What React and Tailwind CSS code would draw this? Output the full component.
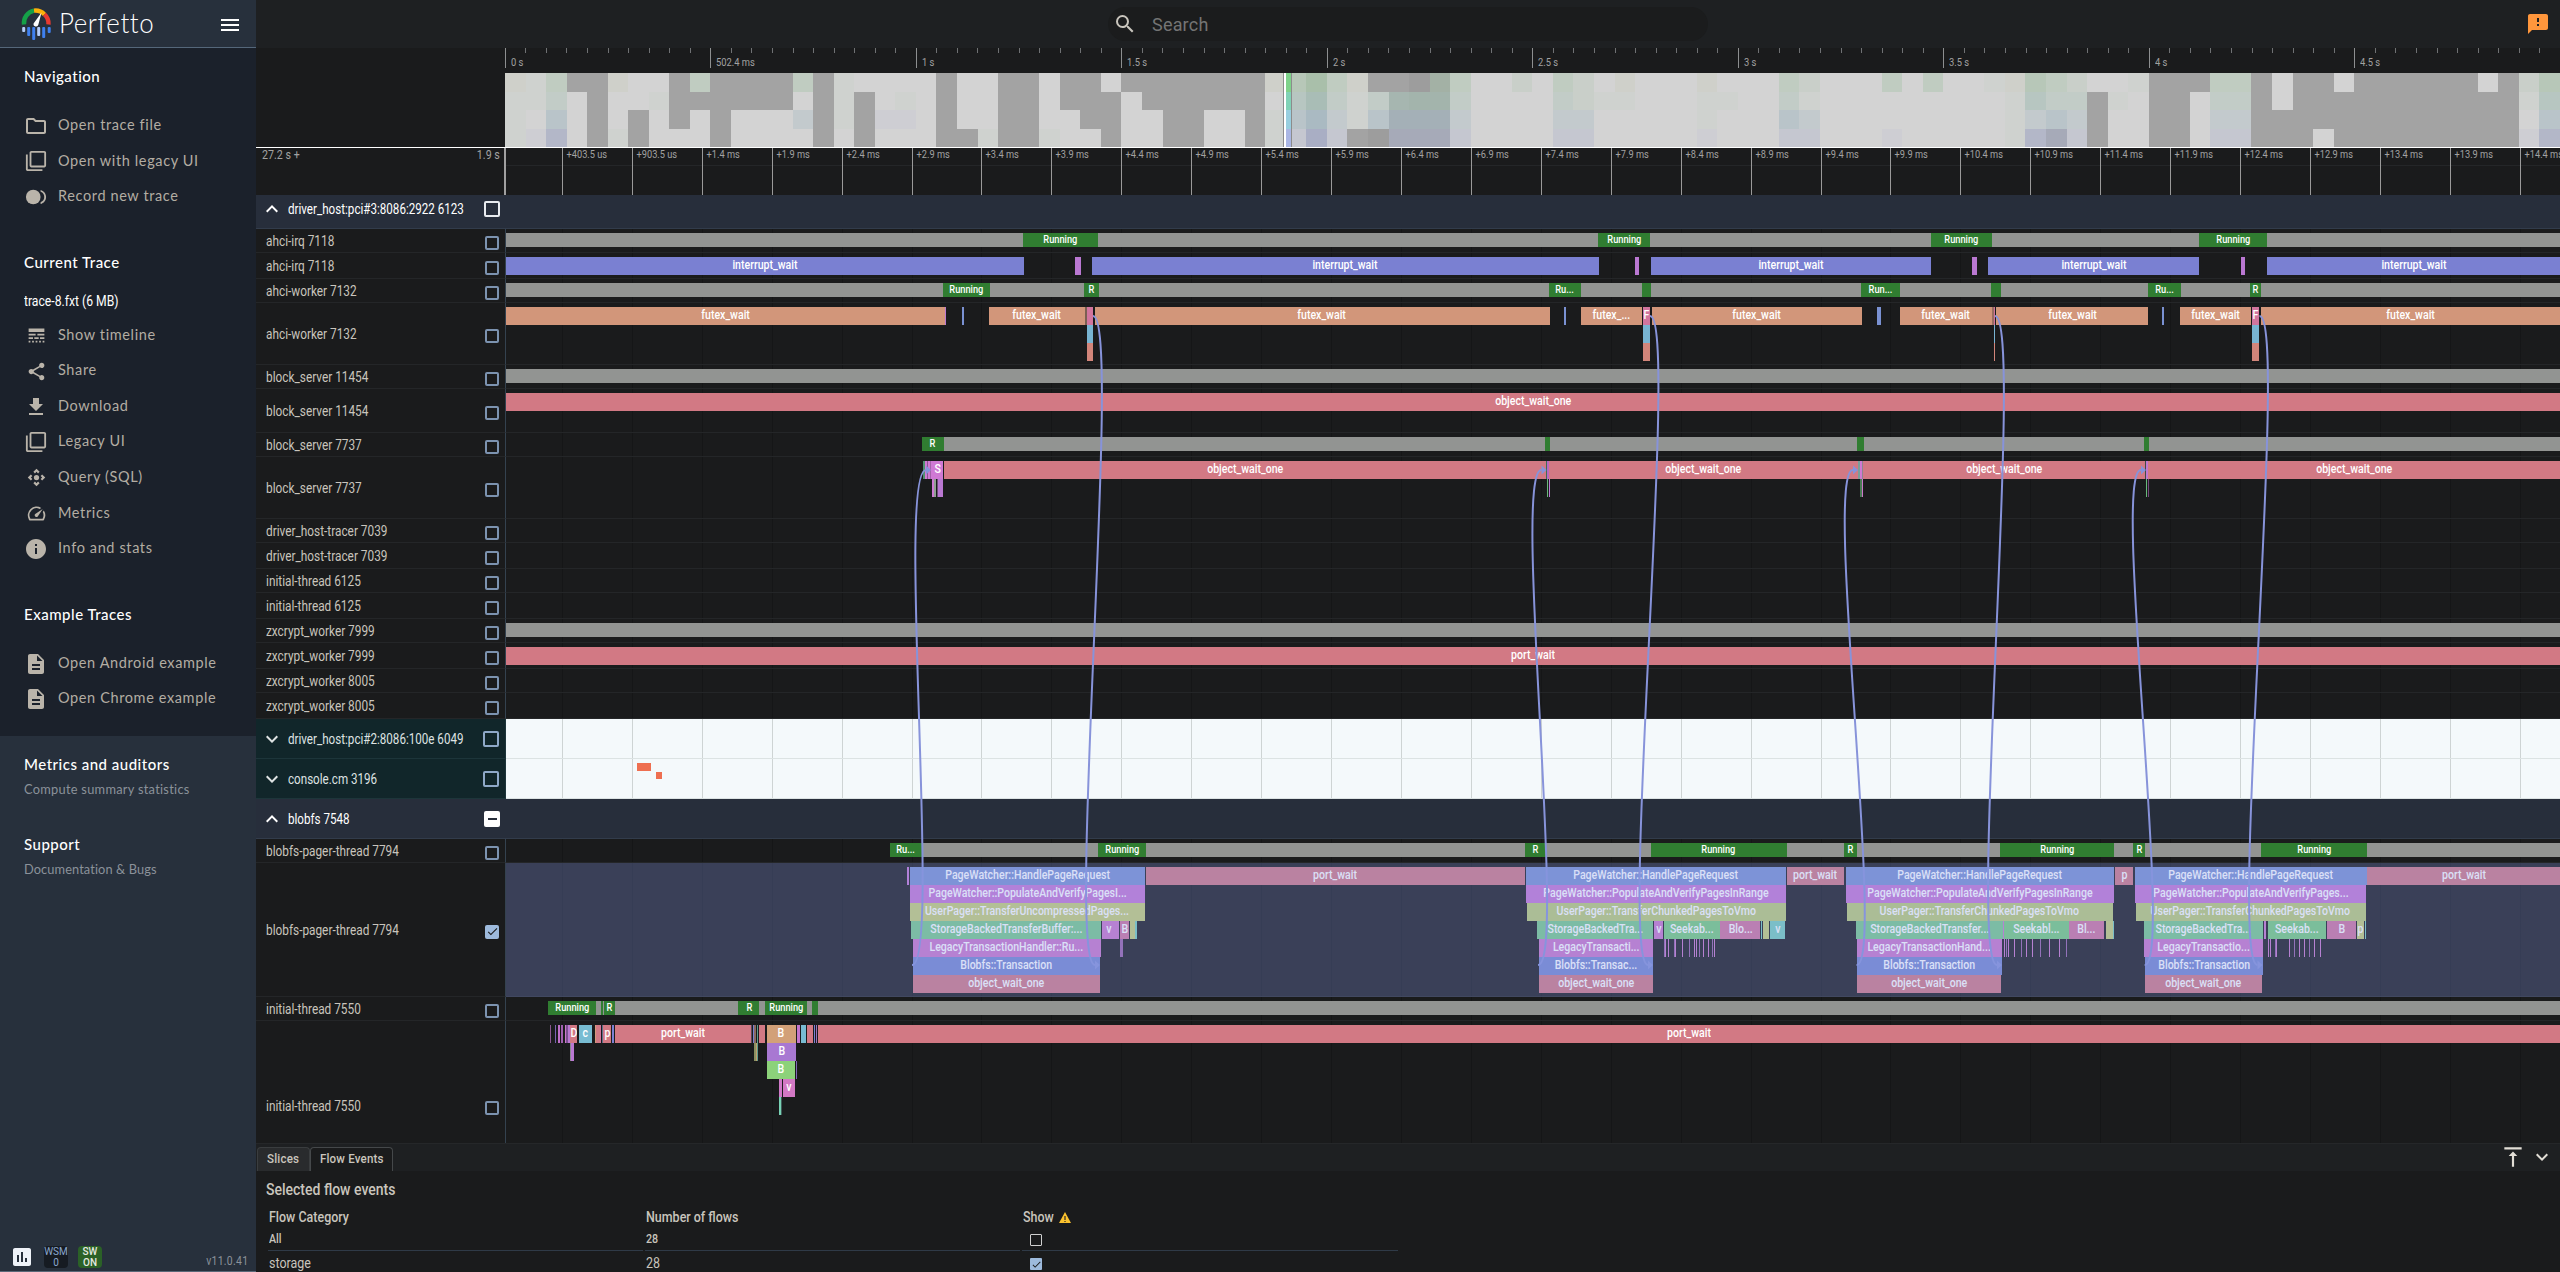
import React from "react";
import {
  MdOutlineFolder, MdFilterNone, MdFiberSmartRecord, MdLineStyle, MdShare, MdFileDownload,
  MdControlCamera, MdSpeed, MdInfo, MdDescription, MdMenu, MdSearch, MdFeedback,
  MdAssessment, MdVerticalAlignTop, MdExpandLess, MdExpandMore, MdCheck,
} from "react-icons/md";

/* ---------- palette ---------- */
const GRAY = "#929492";
const GREEN = "#307d31";
const BLUE = "#7a80d2";
const VIOLET = "#ba78d2";
const ORANGE = "#d2967a";
const RED = "#d27984";
const PINK = "#d2759e";
const CYAN = "#78b4d2";
const SALMON = "#d2857a";
const SKY = "#7a91d2";
const PURPLE = "#c677d4";
const OLIVE = "#c8d074";
const LIME = "#bccd74";
const MINT = "#79cc8a";
const ORCHID = "#cc78ca";
const LEAF = "#78cf7c";
const TEAL = "#78cfbc";
const PLUM = "#9a62a8";

/* ---------- timeline data (x positions in page pixels) ---------- */
const ORIGIN = 506;
const END = 2560;

const irqState = [
  [506, END, GRAY], [1023, 1098, GREEN, "Running"], [1598, 1650, GREEN, "Running"],
  [1930.5, 1991.7, GREEN, "Running"], [2199, 2267, GREEN, "Running"],
];
const irqSlices = [
  [506, 1023.5, BLUE, "interrupt_wait"], [1075, 1081, VIOLET], [1091.5, 1598.7, BLUE, "interrupt_wait"],
  [1634.5, 1639, VIOLET], [1651, 1930.5, BLUE, "interrupt_wait"], [1972, 1977, VIOLET],
  [1988, 2199, BLUE, "interrupt_wait"], [2240.5, 2245, VIOLET], [2267, END, BLUE, "interrupt_wait"],
];
const workerState = [
  [506, END, GRAY], [943, 990, GREEN, "Running"], [1083.5, 1098.5, GREEN, "R"], [1549, 1581, GREEN, "Ru..."],
  [1641.5, 1651, GREEN], [1861, 1900, GREEN, "Run..."], [1991, 2001, GREEN], [2148, 2181, GREEN, "Ru..."],
  [2250, 2261, GREEN, "R"],
];
const workerSlices = [
  [506, 944.5, ORANGE, "futex_wait"], [945, 946, VIOLET], [962, 964, SKY], [989, 1084.5, ORANGE, "futex_wait"],
  [1084.5, 1087, "#7b5f52"], [1087, 1093, PINK], [1087, 1093, CYAN, "", 1], [1087, 1092.5, SALMON, "", 2],
  [1094.5, 1549.5, ORANGE, "futex_wait"], [1564, 1566, SKY], [1581, 1641.5, ORANGE, "futex_..."],
  [1642.5, 1650, PINK, "F"], [1643, 1650, CYAN, "", 1], [1643, 1650, SALMON, "", 2],
  [1651.5, 1862, ORANGE, "futex_wait"], [1876.5, 1881, SKY], [1899.5, 1991.5, ORANGE, "futex_wait"],
  [1991.5, 1994, "#9a6c60"], [1994, 1995, PINK], [1994, 1995, CYAN, "", 1], [1994, 1995, SALMON, "", 2],
  [1996, 2148.4, ORANGE, "futex_wait"], [2162, 2164, SKY], [2180, 2251, ORANGE, "futex_wait"],
  [2252, 2259, PINK, "F"], [2252, 2259, CYAN, "", 1], [2252, 2259, SALMON, "", 2],
  [2261, END, ORANGE, "futex_wait"],
];
const fullGray = [[506, END, GRAY]];
const blockState = [
  [921.5, 943.5, GREEN, "R"], [944, END, GRAY], [1545, 1550, GREEN], [1857, 1863.5, GREEN], [2144, 2149, GREEN],
];
const blockSlices = [
  [923, 925, "#4f9070"], [925, 943, "#cf79d4"], [927, 928, "#8a5790"], [930, 931, "#a463aa"], [932, 943, "#cf79d4", "S"],
  [944, 1546, RED, "object_wait_one"], [1546, 1547, "#3f6d58"], [1547, 1549, "#b967c0"],
  [1549, 1858, RED, "object_wait_one"], [1858, 1859.5, "#79a09a"], [1859.5, 1862, "#cf79d4"], [1862, 1863, "#8f8490"],
  [1863, 2145, RED, "object_wait_one"], [2145, 2146, "#3f4a48"], [2146, 2148, "#c078d0"],
  [2148, END, RED, "object_wait_one"],
  [932, 933.5, "#cf79d4", "", 1], [934, 936, "#8fa08f", "", 1], [937, 938, "#6d4a78", "", 1], [938, 943, VIOLET, "", 1],
  [1547, 1548, "#68b87c", "", 1], [1549, 1550, VIOLET, "", 1], [1860, 1862, "#4a7a55", "", 1], [1862, 1863, ORCHID, "", 1],
  [2146, 2147, "#68b87c", "", 1], [2147.5, 2149, "#74487c", "", 1],
];
const pagerState = [
  [922, END, GRAY], [890, 922, GREEN, "Ru..."], [1098, 1146, GREEN, "Running"], [1524.6, 1545.7, GREEN, "R"],
  [1650.7, 1786.8, GREEN, "Running"], [1843.6, 1857.5, GREEN, "R"], [2000.4, 2114.3, GREEN, "Running"],
  [2133, 2145.4, GREEN, "R"], [2260.7, 2367.5, GREEN, "Running"],
];
const ticks2 = [515, 519, 526, 543, 546, 565, 584, 600, 605, 612, 624, 637, 650, 656].map((p) => 1480 + p / 2.8);
const ticks3 = [12, 17, 22, 39, 60, 74, 90, 112, 137, 164, 185].map((p) => 2000 + p / 2.8);
const ticks4 = [750, 757, 770, 773, 810, 822, 837, 851, 864, 880, 896].map((p) => 2000 + p / 2.8);
const pagerSlices = [
  [907, 909, PURPLE],
  [909.5, 1145, SKY, "PageWatcher::HandlePageRequest"],
  [909.5, 1145, PURPLE, "PageWatcher::PopulateAndVerifyPagesI...", 1],
  [910, 1144.5, OLIVE, "UserPager::TransferUncompressedPages...", 2],
  [911, 1101, MINT, "StorageBackedTransferBuffer:...", 3],
  [1101.5, 1116.5, ORCHID, "v", 3], [1117, 1119, ORCHID, "", 3], [1120, 1129, "#d2759e", "B", 3],
  [1129.5, 1135, OLIVE, "", 3], [1135, 1136.5, TEAL, "", 3],
  [913, 1100.5, ORCHID, "LegacyTransactionHandler::Ru...", 4], [1120, 1123, PLUM, "", 4],
  [913, 1100, "#7687d0", "Blobfs::Transaction", 5], [913, 1100, RED, "object_wait_one", 6],
  [1146, 1524.6, RED, "port_wait"],
  [1525.7, 1786.4, SKY, "PageWatcher::HandlePageRequest"],
  [1525.7, 1786.4, PURPLE, "PageWatcher::PopulateAndVerifyPagesInRange", 1],
  [1527, 1786, LIME, "UserPager::TransferChunkedPagesToVmo", 2],
  [1537, 1653, MINT, "StorageBackedTra...", 3], [1654, 1663, ORCHID, "v", 3], [1664, 1720, LEAF, "Seekab...", 3],
  [1720.4, 1760.4, "#d2759e", "Blo...", 3], [1761, 1762, TEAL, "", 3], [1763, 1769, OLIVE, "", 3], [1770, 1785, TEAL, "v", 3],
  [1539, 1653, ORCHID, "LegacyTransacti...", 4], [1538.5, 1653, "#7687d0", "Blobfs::Transac...", 5],
  [1539, 1652.5, RED, "object_wait_one", 6],
  [1786.5, 1844, RED, "port_wait"],
  [1846, 2113.6, SKY, "PageWatcher::HandlePageRequest"],
  [1846, 2113.6, PURPLE, "PageWatcher::PopulateAndVerifyPagesInRange", 1],
  [1846.5, 2113, LIME, "UserPager::TransferChunkedPagesToVmo", 2],
  [1856, 2002.5, MINT, "StorageBackedTransfer...", 3], [2003, 2004, ORCHID, "", 3], [2004, 2069, LEAF, "Seekabl...", 3],
  [2069.3, 2104.3, "#d2759e", "Bl...", 3], [2105.5, 2112.5, OLIVE, "", 3], [2112.5, 2113.5, TEAL, "", 3],
  [1857, 2002, ORCHID, "LegacyTransactionHand...", 4], [1857, 2002, "#7687d0", "Blobfs::Transaction", 5],
  [1857, 2001, RED, "object_wait_one", 6],
  [2115, 2133, RED, "p"],
  [2134.6, 2366.8, SKY, "PageWatcher::HandlePageRequest"],
  [2135, 2366.4, PURPLE, "PageWatcher::PopulateAndVerifyPages...", 1],
  [2135.5, 2366, LIME, "UserPager::TransferChunkedPagesToVmo", 2],
  [2143.6, 2263, MINT, "StorageBackedTra...", 3], [2264, 2266, ORCHID, "", 3], [2267.5, 2326, LEAF, "Seekab...", 3],
  [2327, 2356, "#d2759e", "B", 3], [2357, 2364, OLIVE, "p", 3], [2364.5, 2366, TEAL, "", 3],
  [2144, 2263, ORCHID, "LegacyTransactio...", 4], [2144.6, 2263, "#7687d0", "Blobfs::Transaction", 5],
  [2144.6, 2262, RED, "object_wait_one", 6],
  [2367, END, RED, "port_wait"],
  ...[...ticks2, ...ticks3, ...ticks4].map((x, i) => [Math.round(x), Math.round(x) + 1, i % 3 === 0 ? PLUM : ORCHID, "", 4]),
];
const initState = [
  [547.5, END, GRAY], [547.5, 596.4, GREEN, "Running"], [600.5, 603, GREEN], [604, 615, GREEN, "R"],
  [738.4, 759.4, GREEN, "R"], [765, 807, GREEN, "Running"], [812, 818, GREEN],
];
const initSlices = [
  [550, 551, "#8a5790"], [555, 556, "#7a62b0"], [558, 559.5, "#c070c8"], [561, 563, "#a060b0"], [565, 566, ORCHID],
  [566, 568, "#7a5090"], [568, 570, VIOLET], [570, 577, RED, "D"], [579, 591.5, "#78bcd2", "c"],
  [595, 596, "#d29a7a"], [596, 599.5, RED], [600, 601, PINK], [601.5, 603, "#5f6f8c"], [603, 611, RED, "p"],
  [612, 614, "#7a80d2"], [615, 750.5, RED, "port_wait"], [751, 752, "#5a4a60"], [752.5, 753.5, "#7a80d2"],
  [754, 756, "#8a6a60"], [756.5, 758, "#5d9a8c"], [758.5, 765, RED], [766.5, 796, "#d2a078", "B"],
  [797, 800, "#c474cc"], [800.5, 806, "#78bcd2"], [806.7, 813, RED], [813.5, 815, "#7a80d2"], [815.5, 817, "#a070c0"],
  [818, END, RED, "port_wait"],
  [570, 571, "#8a8a90", "", 1], [571, 574, VIOLET, "", 1], [754, 756, "#8a9060", "", 1], [756, 757, "#c0a070", "", 1], [757, 758, "#5d9a8c", "", 1],
  [766.5, 796.4, "#a878d2", "B", 1], [767, 795, "#8cd27a", "B", 2], [795.5, 797, "#8068b8", "", 2],
  [778.5, 782, "#cf79c8", "", 3], [782.5, 794.6, "#d278c4", "v", 3], [779, 781, "#78d2b4", "", 4], [781, 782, "#3f5a58", "", 4],
];

const rowsA = [
  ["ahci-irq 7118", "h-[24px]", irqState, true],
  ["ahci-irq 7118", "h-[26px]", irqSlices],
  ["ahci-worker 7132", "h-[24px]", workerState, true],
  ["ahci-worker 7132", "h-[62px]", workerSlices],
  ["block_server 11454", "h-[24px]", fullGray, true],
  ["block_server 11454", "h-[44px]", [[506, END, RED, "object_wait_one"]]],
  ["block_server 7737", "h-[24px]", blockState, true],
  ["block_server 7737", "h-[62px]", blockSlices],
  ["driver_host-tracer 7039", "h-[24px]", []],
  ["driver_host-tracer 7039", "h-[26px]", []],
  ["initial-thread 6125", "h-[24px]", []],
  ["initial-thread 6125", "h-[26px]", []],
  ["zxcrypt_worker 7999", "h-[24px]", fullGray, true],
  ["zxcrypt_worker 7999", "h-[26px]", [[506, END, RED, "port_wait"]]],
  ["zxcrypt_worker 8005", "h-[24px]", []],
  ["zxcrypt_worker 8005", "h-[26px]", []],
];
const rowsB = [
  ["blobfs-pager-thread 7794", "h-[24px]", pagerState, true],
  ["blobfs-pager-thread 7794", "h-[134px]", pagerSlices, false, true],
  ["initial-thread 7550", "h-[24px]", initState, true],
  ["initial-thread 7550", "h-[170px]", initSlices],
];

const gridX = Array.from({ length: 29 }, (_, i) => Math.floor(562.45 + 69.92 * i));
const gridLabels = [
  "+403.5 us", "+903.5 us",
  ...Array.from({ length: 27 }, (_, i) => `+${(1.4 + i * 0.5).toFixed(1)} ms`),
];

/* ---------- overview heat map: four cpu lanes per column ---------- */
const HEAT = {
  L: "#d3d3d3", D: "#a3a3a3", E: "#9d9d9d", o: "#cfd0ca", t: "#cfd2cf", v: "#ceced3", m: "#c9cfc9",
  g: "#c0ccc1", h: "#c2ccc7", b: "#c3cacd", l: "#c5c7d0",
  G: "#b7c7b8", H: "#b7c6c1", B: "#b9c4c9", P: "#b3b7c8",
  1: "#a9bfaa", 2: "#a9bdb6", 3: "#aabac2", 4: "#a9aec4",
  F: "#a6b6b0", K: "#a3b4ac", Q: "#a4b0b7", R: "#a6aab8", J: "#a3b1a5",
};
const cols =
  ("ottt ttLv ghBP DLLL DDDD oLLt LLDD LtLL DDDL gDLL DDDD DDLL DDLL DDLL gLbL DDDD tttL LDDD LLvL LtvL " +
   "LLLL DDDD LLLD LLLt DDDD DDDD LLLt DDLL DDDL LDDD DLLL DDLL DDDD DDDD DDLL DDLL DDDD oLtt GHBl 1234 " +
   "ghbl ottD DhBE DFQR EKQR JKQR ghbl LLLL LLLL mLLL LLLL ghbl mmbl LtLL otLL LLLL LLLL LLLL ottv LtLL " +
   "LLLL LLLL ghBl mtbl LLLL LLLL LLLL gLLv LLLL gLLL LLLL LLLL tLLL ottt GHbP ghBR mhbl LDDD LtLL tLLL " +
   "DDDD DDDD DLLL ghbl ghbl DDDD LLDD DDDD DDDL LDDD DDDD DDDD DDDD DDDD DDDD DDDD LDDD DDDD mtLv GHBP").split(" ");

/* ---------- small pieces ---------- */
function Cond({ children, className = "", origin = "origin-left", scale = "scale-x-[0.89]" }) {
  return <span className={`inline-block whitespace-nowrap font-[Roboto,sans-serif] ${scale} ${origin} ${className}`}>{children}</span>;
}

function Slice({ s, state }) {
  const [x0, x1, color, label, depth = 0] = s;
  return (
    <div
      className={`absolute flex items-center justify-center overflow-hidden ${state ? "h-[14px]" : "h-[18px]"}`}
      style={{ left: x0 - ORIGIN, width: x1 - x0, top: 4 + depth * 18, background: color }}
    >
      {label ? (
        <span className={`shrink-0 whitespace-nowrap scale-x-[0.88] font-[Roboto,sans-serif] font-medium leading-none text-white ${state ? "text-[10.5px]" : "text-[12px] -mt-[2px]"}`}>
          {label}
        </span>
      ) : null}
    </div>
  );
}

function Box({ checked }) {
  return checked ? (
    <span className="flex size-[14px] items-center justify-center rounded-[2px] bg-[#9dbadc] text-[#1a1b1c]"><MdCheck size={13} /></span>
  ) : (
    <span className="size-[14px] rounded-[2px] border-2 border-[#7c93b0]" />
  );
}

function Grid({ dark }) {
  return gridX.map((x) => (
    <div key={x} className={`absolute inset-y-0 w-px ${dark ? "bg-[#151617]" : "bg-[#ced4d4]"}`} style={{ left: x - ORIGIN }} />
  ));
}

function Track({ row }) {
  const [name, h, slices, state, selected] = row;
  return (
    <div className={`flex ${h}`}>
      <div className="flex w-[250px] items-center border-b border-r border-b-[#242628] border-r-[#34424f] pl-[10px] pr-[6px]">
        <Cond scale="scale-x-[0.845]" className="flex-1 text-[14px] leading-none text-[#c9c5bd]">{name}</Cond>
        <span className="mt-[4px] flex"><Box checked={selected} /></span>
      </div>
      <div className="relative flex-1 overflow-hidden border-b border-[#242628]">
        <Grid dark />
        {slices.map((s, i) => <Slice key={i} s={s} state={state} />)}
      </div>
    </div>
  );
}

function OpenGroup({ name, h, partial }) {
  return (
    <div className={`flex items-center border-b border-[#323c4b] bg-[#272e3b] ${h}`}>
      <MdExpandLess size={24} className="ml-[4px] text-white" />
      <Cond scale="scale-x-[0.83]" className="ml-[4px] mt-[1px] w-[196px] text-[14px] text-white">{name}</Cond>
      {partial ? (
        <span className="flex size-4 items-center justify-center rounded-[2px] bg-white"><span className="h-[2px] w-[9px] bg-[#272e3b]" /></span>
      ) : (
        <span className="size-4 rounded-[2px] border-2 border-[#e8ebef]" />
      )}
    </div>
  );
}

function ClosedGroup({ name, children }) {
  return (
    <div className="flex h-10">
      <div className="flex w-[250px] items-center border-b border-r border-[#1d353a] bg-[#11262a] text-[#dfe3e3]">
        <MdExpandMore size={24} className="ml-[4px]" />
        <Cond scale="scale-x-[0.83]" className="ml-[4px] mt-[1px] w-[195px] text-[14px]">{name}</Cond>
        <span className="size-4 rounded-[2px] border-2 border-[#8fa9c8]" />
      </div>
      <div className="relative flex-1 border-b border-[#dce3e3] bg-[#f4f9fb]">
        <Grid />
        {children}
      </div>
    </div>
  );
}

function NavItem({ icon: Icon, label, size = 22 }) {
  return (
    <div className="flex h-[35.6px] items-center">
      <span className="ml-6 flex w-6 justify-center"><Icon size={size} className="text-[#bab4aa]" /></span>
      <span className="-mt-[2px] ml-[10px] font-[Lato,sans-serif] text-[14.5px] tracking-[0.62px] text-[#b3ada3]">{label}</span>
    </div>
  );
}

function Heading({ children }) {
  return <div className="pl-6 font-[Lato,sans-serif] text-[15px] font-medium leading-5 tracking-[0.5px] text-white">{children}</div>;
}

function Logo() {
  const bars = [[0, 5, true], [5, 9], [10, 13], [15, 9, true], [20, 11], [25.5, 6]];
  return (
    <svg width="31" height="34" viewBox="0 0 31 34" className="ml-[21px]">
      <path d="M3 17.5 A12.6 12.6 0 0 1 13 3.6" fill="none" stroke="#15a048" strokeWidth="4.4" />
      <path d="M13 3.6 A12.6 12.6 0 0 1 23.5 7.4" fill="none" stroke="#fbb00a" strokeWidth="4.4" />
      <path d="M23.5 7.4 A12.6 12.6 0 0 1 27.5 17.5" fill="none" stroke="#e93a30" strokeWidth="4.4" />
      <path d="M12.6 16.5 L20.5 5.5 L17.4 17.6 A2.4 2.4 0 0 1 12.6 16.5Z" fill="#fff" />
      {bars.map(([x, h, pale], i) => (
        <rect key={i} x={x + 1.2} y={20} width={3} height={h} rx={1} fill={pale ? "#b4cdfa" : "#3f80ee"} />
      ))}
    </svg>
  );
}

function Sidebar() {
  return (
    <aside className="flex w-64 flex-col border-b border-[#5a6878] bg-[#27303c]">
      <div className="flex h-12 items-center border-b border-[#55677a]">
        <Logo />
        <span className="-mt-[3px] ml-[7px] w-[105px] origin-left scale-x-[0.925] font-[Lato,sans-serif] text-[28px] font-light leading-none tracking-[0.6px] text-white">Perfetto</span>
        <MdMenu size={24} className="ml-[54px] mt-[3px] text-white" />
      </div>
      <div className="h-[688px] bg-[#1b212b]">
        <div className="pt-[18px]"><Heading>Navigation</Heading></div>
        <div className="pt-[22px]">
          <NavItem icon={MdOutlineFolder} label="Open trace file" size={24} />
          <NavItem icon={MdFilterNone} label="Open with legacy UI" />
          <NavItem icon={MdFiberSmartRecord} label="Record new trace" />
        </div>
        <div className="pt-[37px]"><Heading>Current Trace</Heading></div>
        <div className="h-[46px] pl-6 pt-[16px]"><Cond scale="scale-x-[0.87]" className="text-[14px] leading-5 text-white">trace-8.fxt (6 MB)</Cond></div>
        <NavItem icon={MdLineStyle} label="Show timeline" size={21} />
        <NavItem icon={MdShare} label="Share" size={21} />
        <NavItem icon={MdFileDownload} label="Download" size={24} />
        <NavItem icon={MdFilterNone} label="Legacy UI" />
        <NavItem icon={MdControlCamera} label="Query (SQL)" size={21} />
        <NavItem icon={MdSpeed} label="Metrics" size={21} />
        <NavItem icon={MdInfo} label="Info and stats" size={24} />
        <div className="pt-[37px]"><Heading>Example Traces</Heading></div>
        <div className="pt-[22px]">
          <NavItem icon={MdDescription} label="Open Android example" size={24} />
          <NavItem icon={MdDescription} label="Open Chrome example" size={24} />
        </div>
      </div>
      <div className="pt-[18px]"><Heading>Metrics and auditors</Heading></div>
      <div className="pl-6 pt-[5px] font-[Lato,sans-serif] text-[12.8px] leading-5 tracking-[0.28px] text-[#8b929a]">Compute summary statistics</div>
      <div className="pt-[35px]"><Heading>Support</Heading></div>
      <div className="pl-6 pt-[5px] font-[Lato,sans-serif] text-[12.8px] leading-5 tracking-[0.1px] text-[#8b929a]">Documentation &amp; Bugs</div>
      <div className="mb-[2px] mt-auto flex h-6 items-center pl-[10px] pr-[9px]">
        <MdAssessment size={24} className="text-[#eef2f8]" />
        <div className="ml-[10px] flex h-[22px] w-6 flex-col items-center justify-center rounded bg-[#161b22] font-[Roboto,sans-serif] text-[10px] leading-[11px] text-[#8aa7cf]"><span>WSM</span><span>0</span></div>
        <div className="ml-[10px] flex h-[22px] w-6 flex-col items-center justify-center rounded bg-[#2b6127] font-[Roboto,sans-serif] text-[10px] font-medium leading-[11px] text-[#e7e9e2]"><span>SW</span><span>ON</span></div>
        <Cond origin="origin-right" scale="scale-x-[0.87]" className="-mr-px ml-auto mt-[7px] text-[12px] tracking-[0.3px] text-[#8b929a]">v11.0.41</Cond>
      </div>
    </aside>
  );
}

function Overview() {
  return (
    <div className="h-[100px] border-b border-white bg-[#1a1b1c]">
      <div className="relative ml-[249px] h-[25px]">
        {Array.from({ length: 100 }, (_, i) => (
          <div key={i} className={`absolute top-0 w-px ${i % 10 ? "h-[5px] bg-[#6f7173]" : "h-5 bg-[#8d8f90]"}`} style={{ left: Math.floor(0.3 + 20.55 * i) }} />
        ))}
        {["0 s", "502.4 ms", "1 s", "1.5 s", "2 s", "2.5 s", "3 s", "3.5 s", "4 s", "4.5 s"].map((l, i) => (
          <span key={l} className="absolute top-[8px] origin-left scale-x-[0.89] whitespace-nowrap font-[Roboto,sans-serif] text-[10.5px] leading-[14px] text-[#a2a2a2]" style={{ left: 6 + Math.floor(205.5 * i) }}>{l}</span>
        ))}
      </div>
      <div className="relative ml-[249px] flex h-[74px]">
        {cols.map((c, i) => (
          <div key={i} className="flex flex-1 flex-col">
            {c.split("").map((k, j) => <div key={j} className="flex-1" style={{ background: HEAT[k] }} />)}
          </div>
        ))}
        <div className="absolute inset-y-0 left-[778px] flex w-[9px] border-x border-[#8c8c8c] bg-white pl-[2px]">
          <div className="flex flex-1 flex-col">
            <div className="flex-1 bg-[#7ed28a]" /><div className="flex-1 bg-[#80d2b6]" />
            <div className="flex-1 bg-[#98cedf]" /><div className="flex-1 bg-[#aab6e4]" />
          </div>
        </div>
      </div>
    </div>
  );
}

function TimeAxis() {
  return (
    <div className="flex h-[47px]">
      <div className="flex w-[250px] justify-between border-r-2 border-[#a0a0a0] pl-[6px] pr-1">
        <Cond className="text-[12px] leading-[14px] text-[#a2a2a2]">27.2 s +</Cond>
        <Cond origin="origin-right" className="text-[12px] leading-[14px] text-[#a2a2a2]">1.9 s</Cond>
      </div>
      <div className="relative flex-1 overflow-hidden">
        <div className="h-[18px] border-b border-[#242628]" />
        {gridX.map((x, i) => (
          <div key={x} className="absolute inset-y-0 border-l border-[#9a9a9a]" style={{ left: x - ORIGIN }}>
            <span className="block origin-left scale-x-[0.88] whitespace-nowrap pl-[4px] font-[Roboto,sans-serif] text-[10.5px] leading-[14px] text-[#a2a2a2]">{gridLabels[i]}</span>
          </div>
        ))}
      </div>
    </div>
  );
}

/* Flow arrows: [start x, tip x]. */
const up = [[912, 931], [1538, 1546.5], [1856.5, 1858], [2144.6, 2146]];
const down = [[1093, 1100], [1650, 1653], [1995, 2002], [2259.5, 2262.5]];

function Flows() {
  return (
    <svg className="pointer-events-none absolute left-0 top-0" width="2304" height="944" viewBox="256 195 2304 944">
      {[...up.map(([a, b]) => [a, 965, b, 470]), ...down.map(([a, b]) => [a, 316, b, 965])].map(([x0, y0, x1, y1], i) => (
        <g key={i}>
          <path d={`M${x0} ${y0} C${x0 + 30} ${y0} ${x1 - 35} ${y1} ${x1 - 5} ${y1}`} fill="none" stroke="#8793da" strokeWidth="2" />
          <path d={`M${x1} ${y1} l-5 -4.5 v9z`} fill="#8793da" />
        </g>
      ))}
    </svg>
  );
}

function Details() {
  const head = "text-[14px] font-medium leading-4 text-[#c9c5bd]";
  const headCell = "flex h-[21px] items-center pl-px";
  const line = "flex h-[24px] items-center border-b border-[#2f3a47]";
  return (
    <div className="h-[129px] overflow-hidden border-t border-[#252729] bg-[#1a1b1c]">
      <div className="flex h-[27px] items-end bg-[#1e2022] pl-px">
        <div className="flex h-6 w-[53px] justify-center rounded-t border border-b-0 border-[#3a3d3f] bg-[#292b2d]"><Cond origin="origin-center" className="text-[13px] font-medium leading-[22px] tracking-[0.2px] text-[#c9c5bd]">Slices</Cond></div>
        <div className="flex h-6 w-[83px] justify-center rounded-t border border-b-0 border-[#45484a] bg-[#1a1b1c]"><Cond origin="origin-center" className="text-[13px] font-medium leading-[22px] tracking-[0.2px] text-[#c9c5bd]">Flow Events</Cond></div>
        <MdVerticalAlignTop size={26} className="mb-[1px] ml-auto mr-[4px] text-[#e2ded6]" />
        <MdExpandMore size={24} className="mb-[2px] mr-[6px] text-[#e2ded6]" />
      </div>
      <div className="flex h-[35px] items-center pl-[10px] pt-[3px]"><Cond scale="scale-x-[0.875]" className="text-[16px] font-medium leading-5 text-[#c9c5bd]">Selected flow events</Cond></div>
      <div className="ml-[12px] grid grid-cols-[375px_375px_376px] gap-x-[2px]">
        <div className={headCell}><Cond className={head}>Flow Category</Cond></div>
        <div className={headCell}><Cond className={head}>Number of flows</Cond></div>
        <div className={headCell}>
          <Cond className={`w-[36px] ${head}`}>Show</Cond>
          <svg width="12" height="11" viewBox="0 0 12 11" className="mt-[2px]"><path d="M6 0L12 11H0z" fill="#fbc22d" /><path d="M6 4v4M6 9v1" stroke="#3a3226" strokeWidth="1.3" /></svg>
        </div>
        <div className={`${line} pl-px`}><Cond className="text-[12px] font-medium leading-4 text-[#c9c5bd]">All</Cond></div>
        <div className={`${line} pl-px`}><Cond className="text-[12px] font-medium leading-4 text-[#c9c5bd]">28</Cond></div>
        <div className={`${line} pl-[8px] pt-[3px]`}><span className="block size-3 rounded-[1px] border border-[#d0d0d0]" /></div>
        <div className="flex h-[22px] items-start pl-px pt-[4px]"><Cond className="text-[14px] leading-[17px] text-[#c9c5bd]">storage</Cond></div>
        <div className="flex h-[22px] items-start pl-px pt-[4px]"><Cond className="text-[14px] leading-[17px] text-[#c9c5bd]">28</Cond></div>
        <div className="h-[22px] pl-[8px] pt-[7px]"><span className="flex size-3 items-center justify-center rounded-[1px] bg-[#9dbadc] text-[#1a1b1c]"><MdCheck size={11} /></span></div>
      </div>
    </div>
  );
}

export default function App() {
  return (
    <div className="flex h-[1272px] w-[2560px] overflow-hidden bg-[#1a1b1c]">
      <Sidebar />
      <main className="flex w-[2304px] flex-col">
        <header className="flex h-12 items-center bg-[#1e2022]">
          <div className="ml-[852px] flex h-[34px] w-[600px] items-center rounded-full bg-[#1b1c1d] pl-[5px]">
            <MdSearch size={24} className="text-[#c9c5bd]" />
            <span className="ml-[15px] mt-[2px] font-[Roboto,sans-serif] text-[18px] leading-none tracking-[0.2px] text-[#747474]">Search</span>
          </div>
          <MdFeedback size={24} className="ml-auto mr-[10px] text-[#ff963c]" />
        </header>
        <Overview />
        <TimeAxis />
        <div className="relative h-[948px] shrink-0 overflow-hidden">
          <OpenGroup name="driver_host:pci#3:8086:2922 6123" h="h-[34px] pb-[6px]" />
          {rowsA.map((r, i) => <Track key={i} row={r} />)}
          <ClosedGroup name="driver_host:pci#2:8086:100e 6049" />
          <ClosedGroup name="console.cm 3196">
            <div className="absolute left-[131px] top-[4px] h-[8px] w-[14px] bg-[#ee6f50]" />
            <div className="absolute left-[150px] top-[13px] h-[7px] w-[6px] bg-[#ee6f50]" />
          </ClosedGroup>
          <OpenGroup name="blobfs 7548" h="h-10" partial />
          {rowsB.map((r, i) => <Track key={i} row={r} />)}
          <Flows />
          <div className="absolute left-[250px] right-0 top-[668px] h-[134px] bg-[#8398e6]/30" />
        </div>
        <Details />
      </main>
    </div>
  );
}
